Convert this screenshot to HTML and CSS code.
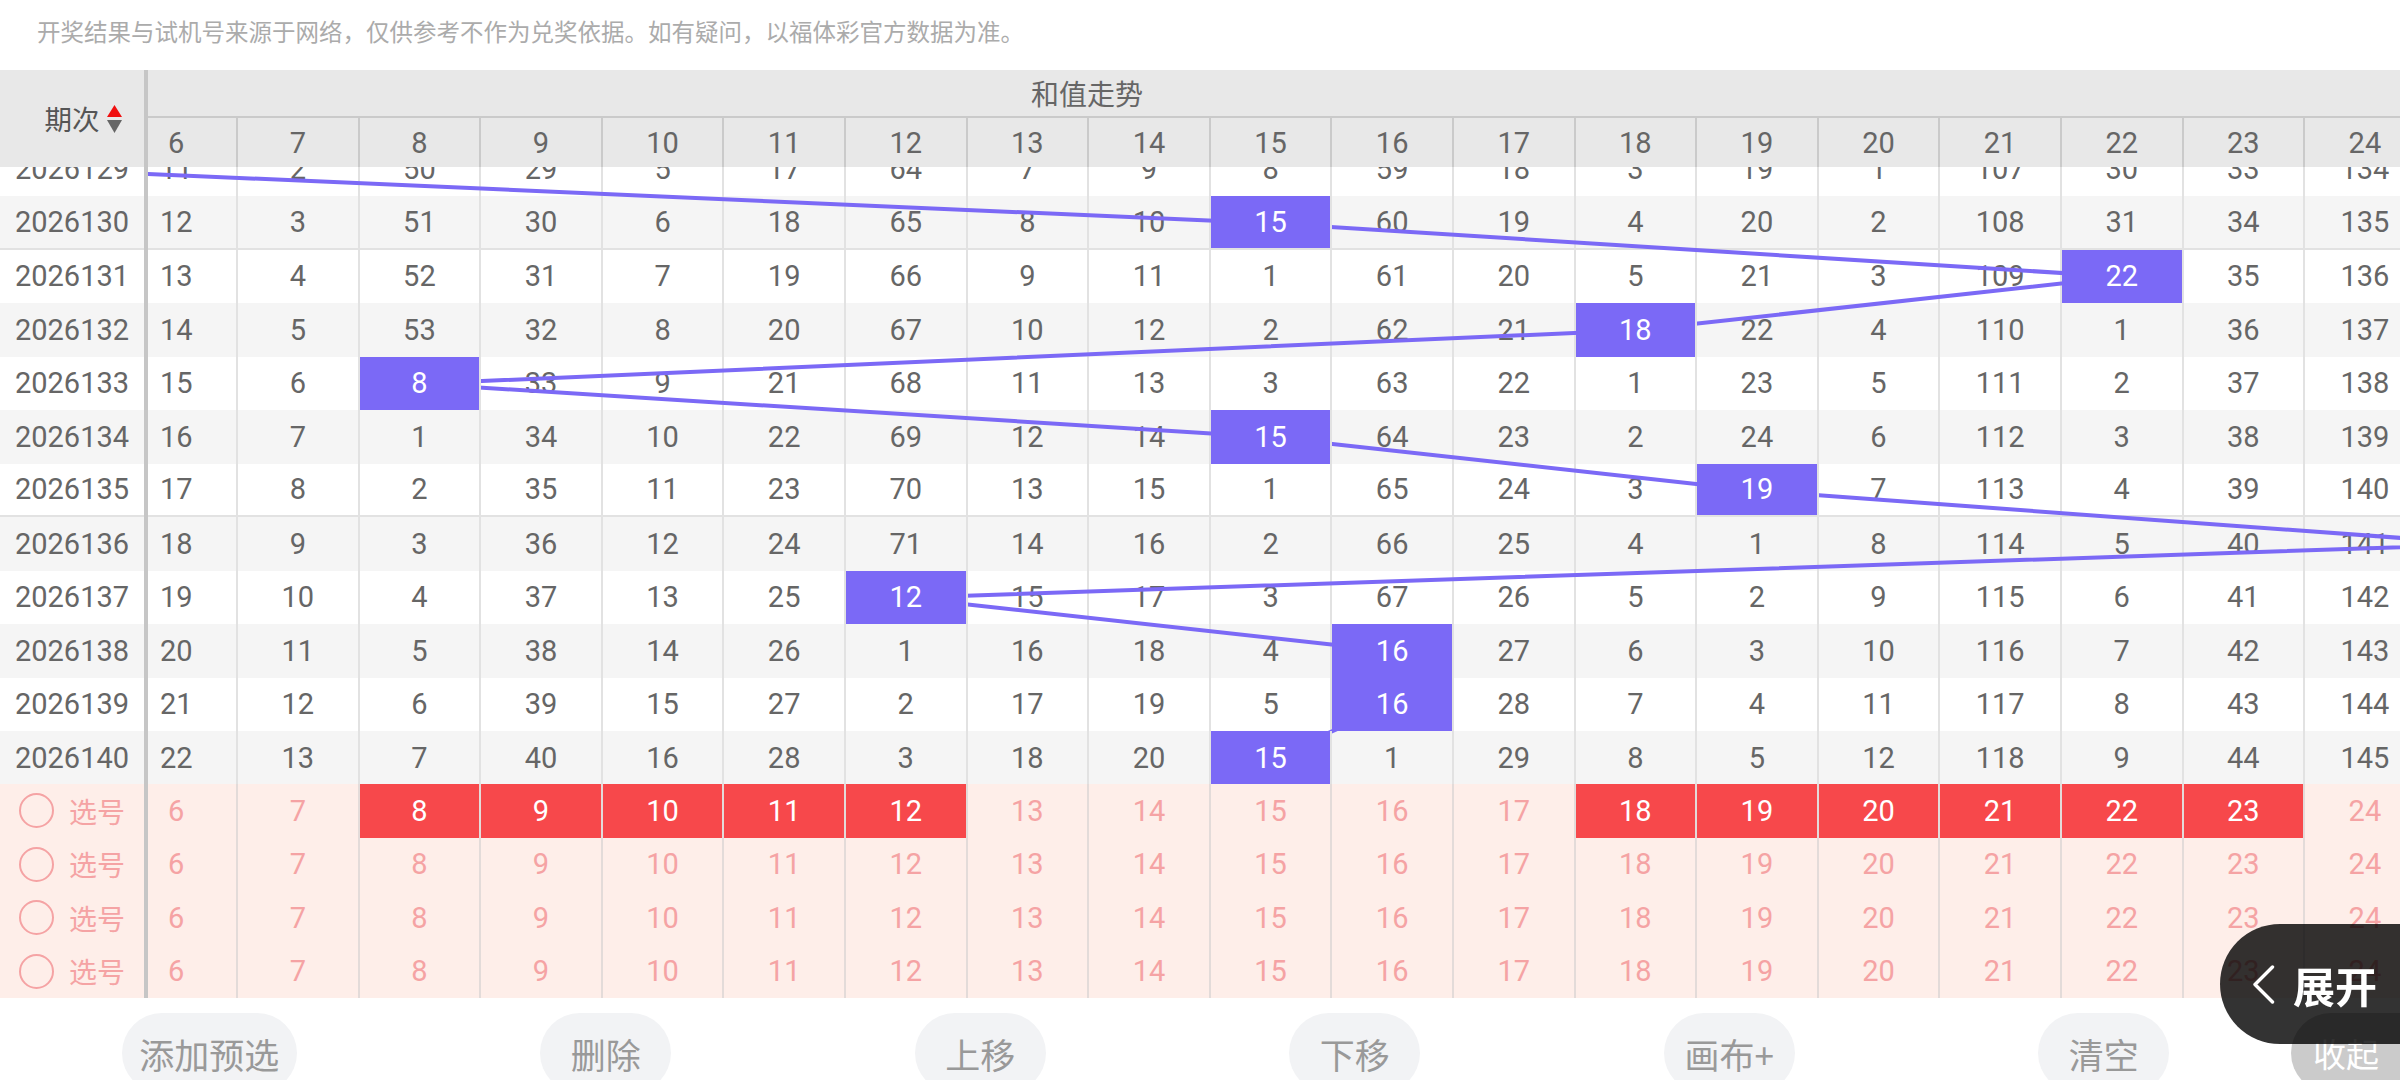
FILE: index.html
```html
<!DOCTYPE html>
<html lang="zh-CN">
<head>
<meta charset="utf-8">
<title>和值走势</title>
<link rel="stylesheet" href="styles.css">
</head>
<body>
<div class="notice">开奖结果与试机号来源于网络，仅供参考不作为兑奖依据。如有疑问，以福体彩官方数据为准。</div>
<div class="sheet">
  <div class="head">
    <div class="lhead"><span class="qc">期次</span><svg class="sort" width="15" height="28" viewBox="0 0 15 28"><polygon points="7.5,0 15,12 0,12" fill="#f01010"/><polygon points="0,15 15,15 7.5,28" fill="#666"/></svg></div>
    <div class="rview">
      <div class="inner">
        <div class="title">和值走势</div>
        <div class="nums"><span>6</span><span>7</span><span>8</span><span>9</span><span>10</span><span>11</span><span>12</span><span>13</span><span>14</span><span>15</span><span>16</span><span>17</span><span>18</span><span>19</span><span>20</span><span>21</span><span>22</span><span>23</span><span>24</span></div>
      </div>
    </div>
  </div>
  <div class="body">
    <div class="lbody">
      <div class="shift">
        <div class="lrow">2026129</div>
        <div class="lrow alt sep">2026130</div>
        <div class="lrow">2026131</div>
        <div class="lrow alt">2026132</div>
        <div class="lrow">2026133</div>
        <div class="lrow alt">2026134</div>
        <div class="lrow sep">2026135</div>
        <div class="lrow alt">2026136</div>
        <div class="lrow">2026137</div>
        <div class="lrow alt">2026138</div>
        <div class="lrow">2026139</div>
        <div class="lrow alt">2026140</div>
      </div>
    </div>
    <div class="rview">
      <div class="inner shift">
        <svg class="trend" width="2310" height="642" viewBox="0 0 2310.4 642"><polyline points="-182.4,-26.75 -60.8,26.75 1155.2,80.25 2006.4,133.75 1520,187.25 304,240.75 1155.2,294.25 1641.6,347.75 2371.2,401.25 790.4,454.75 1276.8,508.25 1276.8,561.75 1155.2,615.25" fill="none" stroke="#7b69f6" stroke-width="4" stroke-linejoin="round"/></svg>
        <div class="row"><span>11</span><span>2</span><span>50</span><span>29</span><span>5</span><span>17</span><span>64</span><span>7</span><span>9</span><span>8</span><span>59</span><span>18</span><span>3</span><span>19</span><span>1</span><span>107</span><span>30</span><span>33</span><span>134</span></div>
        <div class="row alt sep"><span>12</span><span>3</span><span>51</span><span>30</span><span>6</span><span>18</span><span>65</span><span>8</span><span>10</span><span class="hit">15</span><span>60</span><span>19</span><span>4</span><span>20</span><span>2</span><span>108</span><span>31</span><span>34</span><span>135</span></div>
        <div class="row"><span>13</span><span>4</span><span>52</span><span>31</span><span>7</span><span>19</span><span>66</span><span>9</span><span>11</span><span>1</span><span>61</span><span>20</span><span>5</span><span>21</span><span>3</span><span>109</span><span class="hit">22</span><span>35</span><span>136</span></div>
        <div class="row alt"><span>14</span><span>5</span><span>53</span><span>32</span><span>8</span><span>20</span><span>67</span><span>10</span><span>12</span><span>2</span><span>62</span><span>21</span><span class="hit">18</span><span>22</span><span>4</span><span>110</span><span>1</span><span>36</span><span>137</span></div>
        <div class="row"><span>15</span><span>6</span><span class="hit">8</span><span>33</span><span>9</span><span>21</span><span>68</span><span>11</span><span>13</span><span>3</span><span>63</span><span>22</span><span>1</span><span>23</span><span>5</span><span>111</span><span>2</span><span>37</span><span>138</span></div>
        <div class="row alt"><span>16</span><span>7</span><span>1</span><span>34</span><span>10</span><span>22</span><span>69</span><span>12</span><span>14</span><span class="hit">15</span><span>64</span><span>23</span><span>2</span><span>24</span><span>6</span><span>112</span><span>3</span><span>38</span><span>139</span></div>
        <div class="row sep"><span>17</span><span>8</span><span>2</span><span>35</span><span>11</span><span>23</span><span>70</span><span>13</span><span>15</span><span>1</span><span>65</span><span>24</span><span>3</span><span class="hit">19</span><span>7</span><span>113</span><span>4</span><span>39</span><span>140</span></div>
        <div class="row alt"><span>18</span><span>9</span><span>3</span><span>36</span><span>12</span><span>24</span><span>71</span><span>14</span><span>16</span><span>2</span><span>66</span><span>25</span><span>4</span><span>1</span><span>8</span><span>114</span><span>5</span><span>40</span><span>141</span></div>
        <div class="row"><span>19</span><span>10</span><span>4</span><span>37</span><span>13</span><span>25</span><span class="hit">12</span><span>15</span><span>17</span><span>3</span><span>67</span><span>26</span><span>5</span><span>2</span><span>9</span><span>115</span><span>6</span><span>41</span><span>142</span></div>
        <div class="row alt"><span>20</span><span>11</span><span>5</span><span>38</span><span>14</span><span>26</span><span>1</span><span>16</span><span>18</span><span>4</span><span class="hit">16</span><span>27</span><span>6</span><span>3</span><span>10</span><span>116</span><span>7</span><span>42</span><span>143</span></div>
        <div class="row"><span>21</span><span>12</span><span>6</span><span>39</span><span>15</span><span>27</span><span>2</span><span>17</span><span>19</span><span>5</span><span class="hit">16</span><span>28</span><span>7</span><span>4</span><span>11</span><span>117</span><span>8</span><span>43</span><span>144</span></div>
        <div class="row alt"><span>22</span><span>13</span><span>7</span><span>40</span><span>16</span><span>28</span><span>3</span><span>18</span><span>20</span><span class="hit">15</span><span>1</span><span>29</span><span>8</span><span>5</span><span>12</span><span>118</span><span>9</span><span>44</span><span>145</span></div>
      </div>
    </div>
  </div>
  <div class="pick">
    <div class="lpick">
      <div class="lprow"><i class="circle"></i>选号</div>
      <div class="lprow"><i class="circle"></i>选号</div>
      <div class="lprow"><i class="circle"></i>选号</div>
      <div class="lprow"><i class="circle"></i>选号</div>
    </div>
    <div class="rview">
      <div class="inner">
        <div class="prow"><span>6</span><span>7</span><span class="on">8</span><span class="on">9</span><span class="on">10</span><span class="on">11</span><span class="on">12</span><span>13</span><span>14</span><span>15</span><span>16</span><span>17</span><span class="on">18</span><span class="on">19</span><span class="on">20</span><span class="on">21</span><span class="on">22</span><span class="on">23</span><span>24</span></div>
        <div class="prow"><span>6</span><span>7</span><span>8</span><span>9</span><span>10</span><span>11</span><span>12</span><span>13</span><span>14</span><span>15</span><span>16</span><span>17</span><span>18</span><span>19</span><span>20</span><span>21</span><span>22</span><span>23</span><span>24</span></div>
        <div class="prow"><span>6</span><span>7</span><span>8</span><span>9</span><span>10</span><span>11</span><span>12</span><span>13</span><span>14</span><span>15</span><span>16</span><span>17</span><span>18</span><span>19</span><span>20</span><span>21</span><span>22</span><span>23</span><span>24</span></div>
        <div class="prow"><span>6</span><span>7</span><span>8</span><span>9</span><span>10</span><span>11</span><span>12</span><span>13</span><span>14</span><span>15</span><span>16</span><span>17</span><span>18</span><span>19</span><span>20</span><span>21</span><span>22</span><span>23</span><span>24</span></div>
      </div>
    </div>
  </div>
</div>
<div class="actions">
  <div class="btns">
    <div class="btn">添加预选</div>
    <div class="btn">删除</div>
    <div class="btn">上移</div>
    <div class="btn">下移</div>
    <div class="btn">画布+</div>
    <div class="btn">清空</div>
  </div>
  <div class="collapse">收起</div>
</div>
<div class="expand"><svg class="chev" width="23" height="39" viewBox="0 0 23 39"><polyline points="20.5,2 3,19.5 20.5,37" fill="none" stroke="#fff" stroke-width="3.4" stroke-linecap="round" stroke-linejoin="round"/></svg><span>展开</span></div>
</body>
</html>
```
FILE: styles.css
```css
html, body {
  margin: 0;
  padding: 0;
  width: 2400px;
  height: 1080px;
  overflow: hidden;
  background: #fff;
  font-family: Roboto, "Noto Sans CJK SC", sans-serif;
}

.notice {
  height: 70px;
  box-sizing: border-box;
  padding: 14px 0 0 37px;
  font-family: "Noto Sans CJK SC", sans-serif;
  font-size: 23.5px;
  line-height: 34px;
  color: #ababab;
  white-space: nowrap;
}

.head, .body, .pick {
  display: flex;
}

.lhead, .lbody, .lpick {
  flex: none;
  width: 148px;
  box-sizing: border-box;
  border-right: 4px solid #c6c6c6;
}

.rview {
  flex: 1;
  min-width: 0;
  overflow: hidden;
}

.inner {
  width: 2310.4px;
  margin-left: -31.6px;
}

/* header */
.head {
  height: 97px;
  background: #e8e8e8;
}

.lhead {
  display: flex;
  align-items: center;
  justify-content: center;
  gap: 7px;
  padding-left: 22px;
}

.qc {
  font-family: "Noto Sans CJK SC", sans-serif;
  font-size: 27.5px;
  color: #555;
  line-height: 1;
}

.title {
  height: 48px;
  box-sizing: border-box;
  border-bottom: 2px solid #cacaca;
  padding-left: 914.6px;
  font-family: "Noto Sans CJK SC", sans-serif;
  font-size: 28px;
  line-height: 46px;
  color: #666;
}

.nums {
  display: grid;
  grid-template-columns: repeat(19, 121.6px);
  height: 49px;
}

.nums span {
  display: flex;
  align-items: center;
  justify-content: center;
  border-right: 2px solid #cacaca;
  font-size: 29px;
  color: #666;
}

/* body */
.body {
  height: 617px;
  overflow: hidden;
}

.shift {
  margin-top: -24.5px;
  position: relative;
}

.lrow {
  height: 53.5px;
  box-sizing: border-box;
  display: flex;
  align-items: center;
  justify-content: center;
  font-size: 29px;
  color: #666;
}

.row {
  display: grid;
  grid-template-columns: repeat(19, 121.6px);
  height: 53.5px;
  box-sizing: border-box;
}

.alt {
  background: #f5f5f5;
}

.sep {
  border-bottom: 2px solid #e2e2e2;
}

.row span {
  display: flex;
  align-items: center;
  justify-content: center;
  border-right: 2px solid #e2e2e2;
  font-size: 29px;
  color: #666;
}

.row span.hit {
  position: relative;
  z-index: 2;
  background: #7b69f6;
  color: #fff;
}

.trend {
  position: absolute;
  left: 0;
  top: 0;
  z-index: 1;
  overflow: visible;
  pointer-events: none;
}

/* pick rows */
.pick {
  background: #feeee9;
}

.lprow {
  height: 53.5px;
  display: flex;
  align-items: center;
  justify-content: center;
  gap: 15px;
  font-family: "Noto Sans CJK SC", sans-serif;
  font-size: 28px;
  color: #f5a3a4;
}

.circle {
  display: block;
  width: 35px;
  height: 35px;
  box-sizing: border-box;
  border: 2px solid #f5a3a4;
  border-radius: 50%;
}

.prow {
  display: grid;
  grid-template-columns: repeat(19, 121.6px);
  height: 53.5px;
}

.prow span {
  display: flex;
  align-items: center;
  justify-content: center;
  border-right: 2px solid #e3dbd9;
  font-size: 29px;
  color: #f5a3a4;
}

.prow span.on {
  background: #f7484b;
  color: #fff;
}

/* actions */
.actions {
  display: flex;
  margin-top: 15px;
  height: 80px;
}

.btns {
  flex: 1;
  display: flex;
  justify-content: space-around;
}

.btn {
  min-width: 131px;
  height: 80px;
  padding: 0 17.5px;
  box-sizing: border-box;
  border-radius: 40px;
  background: #f2f3f5;
  color: #999;
  font-family: "Noto Sans CJK SC", sans-serif;
  font-size: 35px;
  display: flex;
  align-items: center;
  justify-content: center;
  white-space: nowrap;
}

.collapse {
  flex: none;
  width: 109px;
  height: 80px;
  box-sizing: border-box;
  padding-left: 22px;
  border-radius: 40px 0 0 40px;
  background: #cbcbcb;
  color: #fff;
  font-family: "Noto Sans CJK SC", sans-serif;
  font-size: 33px;
  display: flex;
  align-items: center;
  white-space: nowrap;
}

.expand {
  position: fixed;
  left: 2220px;
  top: 924px;
  width: 180px;
  height: 120px;
  box-sizing: border-box;
  padding-left: 32px;
  border-radius: 60px 0 0 60px;
  background: rgba(0, 0, 0, 0.8);
  display: flex;
  align-items: center;
  gap: 18px;
  color: #fff;
  font-family: "Noto Sans CJK SC", sans-serif;
  font-size: 42px;
  font-weight: 700;
  white-space: nowrap;
  z-index: 10;
}

.chev {
  flex: none;
}
```
